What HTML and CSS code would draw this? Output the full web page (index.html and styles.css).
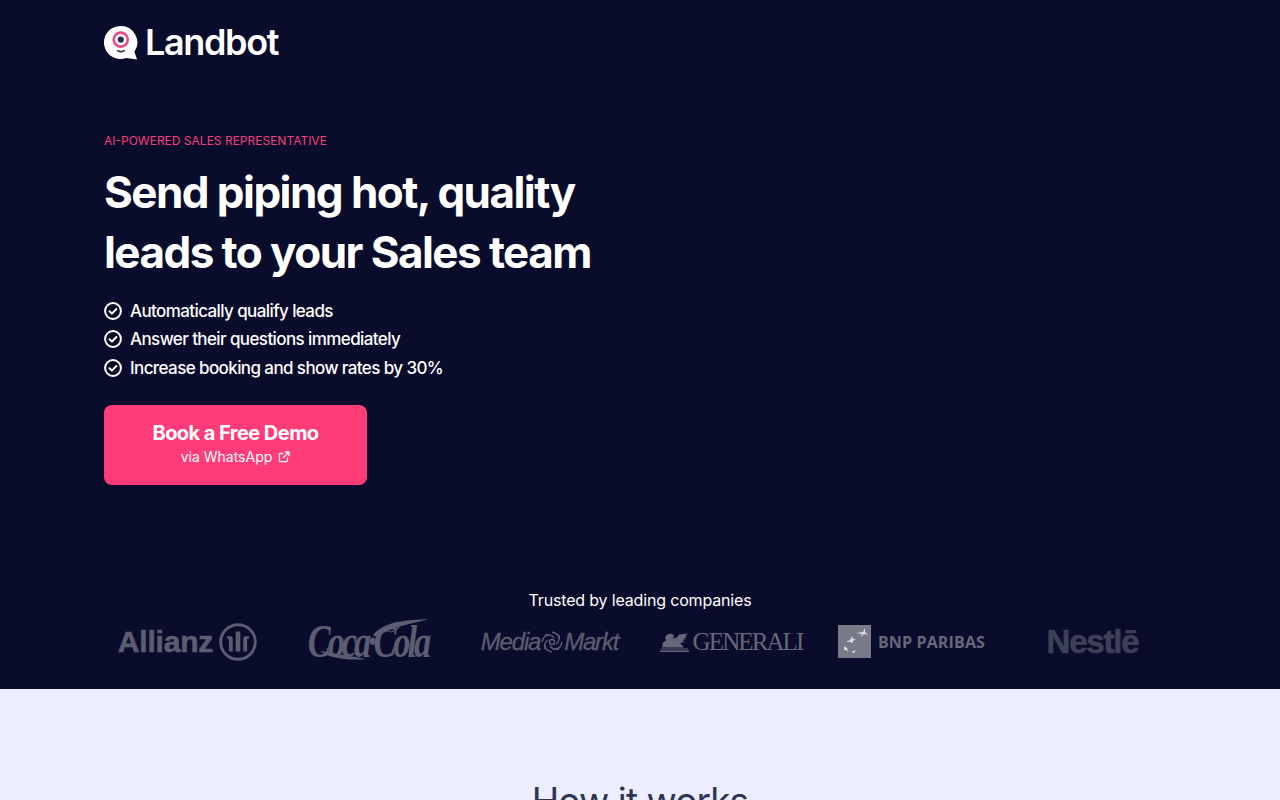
FILE: index.html
```html
<!DOCTYPE html>
<html lang="en">
<head>
<meta charset="utf-8">
<title>Landbot</title>
<link rel="stylesheet" href="styles.css">
</head>
<body>
<section class="hero">
  <header class="brand">
    <svg class="brand-mark" viewBox="0 0 34 34" width="34" height="34" aria-hidden="true">
      <path d="M16.5 0a16.5 16.5 0 1 0 5.6 32l10.9 1.4-2.6-7.6A16.5 16.5 0 0 0 16.5 0z" fill="#fff"/>
      <circle cx="16.8" cy="13.6" r="7" fill="none" stroke="#f0487f" stroke-width="2.6"/>
      <circle cx="16.8" cy="13.6" r="3.1" fill="#2c3050"/>
      <path d="M13.6 24.6c2 1.3 4.6 1.3 6.6 0" fill="none" stroke="#2c3050" stroke-width="1.7" stroke-linecap="round"/>
    </svg>
    <span class="brand-name">Landbot</span>
  </header>
  <div class="intro">
    <p class="eyebrow">AI-POWERED SALES REPRESENTATIVE</p>
    <h1 class="title">Send piping hot, quality<br>leads to your Sales team</h1>
    <ul class="checks">
      <li class="check"><svg class="check-icon" viewBox="0 0 18 18" aria-hidden="true"><circle cx="9" cy="9" r="7.9" fill="none" stroke="#fff" stroke-width="2"/><path d="M5.5 9.3l2.4 2.3 4.5-4.6" fill="none" stroke="#fff" stroke-width="2" stroke-linecap="round" stroke-linejoin="round"/></svg>Automatically qualify leads</li>
      <li class="check"><svg class="check-icon" viewBox="0 0 18 18" aria-hidden="true"><circle cx="9" cy="9" r="7.9" fill="none" stroke="#fff" stroke-width="2"/><path d="M5.5 9.3l2.4 2.3 4.5-4.6" fill="none" stroke="#fff" stroke-width="2" stroke-linecap="round" stroke-linejoin="round"/></svg>Answer their questions immediately</li>
      <li class="check"><svg class="check-icon" viewBox="0 0 18 18" aria-hidden="true"><circle cx="9" cy="9" r="7.9" fill="none" stroke="#fff" stroke-width="2"/><path d="M5.5 9.3l2.4 2.3 4.5-4.6" fill="none" stroke="#fff" stroke-width="2" stroke-linecap="round" stroke-linejoin="round"/></svg>Increase booking and show rates by 30%</li>
    </ul>
    <a class="cta" href="#">
      <span class="cta-main">Book a Free Demo</span>
      <span class="cta-sub">via WhatsApp
        <svg class="cta-icon" viewBox="0 0 12 12" aria-hidden="true"><path d="M9.5 7v2.6a1 1 0 0 1-1 1H2.4a1 1 0 0 1-1-1V3.5a1 1 0 0 1 1-1H5M7.4 1h3.6v3.6M11 1L5.4 6.6" fill="none" stroke="#fff" stroke-width="1.3" stroke-linecap="round" stroke-linejoin="round"/></svg>
      </span>
    </a>
  </div>
  <div class="trusted">
    <p class="trusted-title">Trusted by leading companies</p>
    <div class="logos">
      <div class="logo logo-allianz"><span>Allianz</span>
        <svg class="allianz-mark" viewBox="0 0 36 36" aria-hidden="true"><circle cx="18" cy="18" r="16.4" fill="none" stroke="currentColor" stroke-width="2.8"/><path d="M7.5 12.5h3.3q2.2 0 2.2 2.2V27H9.4V15.6q0-1-1.9-1zM15.8 8h4.4v19h-4.4zM28.5 12.5h-3.3q-2.2 0-2.2 2.2V27h3.6V15.6q0-1 1.9-1z" fill="currentColor"/></svg>
      </div>
      <div class="logo logo-coke"><span class="coke-word">Coca·Cola</span>
        <svg class="coke-swoosh" viewBox="0 0 122 44" aria-hidden="true"><path d="M13 33c14 2 30 5 46 8-16 1.500-36 0-46-8z" fill="currentColor"/><path d="M66 17C78 3 100 2 122 1c-18 5-36 7-52 18z" fill="currentColor"/><ellipse cx="87" cy="9" rx="7" ry="3.500" transform="rotate(-35 87 9)" fill="none" stroke="currentColor"/></svg>
      </div>
      <div class="logo logo-mm"><span>Media</span>
        <svg class="mm-mark" viewBox="0 0 22 22" aria-hidden="true"><g fill="none" stroke="currentColor" stroke-width="1.400"><circle cx="11" cy="11" r="2.500"/><path d="M11 1c5 1 7 4 7 7M21 11c-1 5-4 7-7 7M11 21c-5-1-7-4-7-7M1 11c1-5 4-7 7-7M4 4c4-1 7 0 9 3M18 4c1 4 0 7-3 9M18 18c-4 1-7 0-9-3M4 18c-1-4 0-7 3-9"/></g></svg>
        <span>Markt</span>
      </div>
      <div class="logo logo-generali">
        <svg class="lion" viewBox="0 0 31 20" aria-hidden="true"><path d="M1 20v-1.500h29V20zM2 17.500v-1h27v1zM3 15.500l1-5 3-2-1-3 2-3 4-1 3 2-1 3 4-1 2-3 9-1-3 2h3l-4 2h3l-4 2h3l-4 1.500 3 1-5 1 4 4.500z" fill="currentColor"/></svg>
        <span>GENERALI</span>
      </div>
      <div class="logo logo-bnp">
        <svg class="bnp-mark" viewBox="0 0 33 33" aria-hidden="true"><rect width="33" height="33" fill="#787a87"/><path d="M18 8l7-1 2-4 0 4 3 3-4-1-3 3 1-3zM8 17l4-2 2-4 1 3 3 0-3 2-1 3-1-2zM6 21l3 2 1 4-2-2-2 0zM13 27l5-2-2 3z" fill="#d9dae0"/></svg>
        <span>BNP PARIBAS</span>
      </div>
      <div class="logo logo-nestle"><span>Nestlē</span></div>
    </div>
  </div>
</section>
<section class="how">
  <h2 class="how-title">How it works</h2>
</section>
</body>
</html>
```
FILE: styles.css
```css
* { box-sizing: border-box; }
html, body { margin: 0; padding: 0; overflow: hidden; height: 800px; }
body { font-family: Inter, "Liberation Sans", sans-serif; background: #eceeff; color: #fff; }
.hero { background: #0a0c2c; height: 689px; padding: 26px 0 0; display: flex; flex-direction: column; }
.brand { display: flex; align-items: center; gap: 7px; padding-left: 104px; height: 33px; }
.brand-mark { width: 34px; height: 34px; flex: none; }
.brand-name { font-size: 36px; font-weight: 600; letter-spacing: -1.35px; line-height: 33px; }
.intro { padding: 75px 0 0 104px; display: flex; flex-direction: column; align-items: flex-start; }
.eyebrow { margin: 0; font-size: 12px; line-height: 14px; color: #f43f78; letter-spacing: 0; }
.title { margin: 14px 0 0; font-size: 44px; line-height: 60px; font-weight: 700; letter-spacing: -1.55px; }
.checks { list-style: none; margin: 14.7px 0 0; padding: 0; }
.check { display: flex; align-items: center; gap: 8px; height: 28.5px; font-size: 17px; font-weight: 500; letter-spacing: -.6px; }
.check-icon { width: 18px; height: 18px; flex: none; }
.cta { margin-top: 22.8px; width: 263px; height: 80px; padding-bottom: 2px; background: #ff3c78; border-radius: 8px; display: flex; flex-direction: column; align-items: center; justify-content: center; color: #fff; text-decoration: none; }
.cta-main { font-size: 20px; line-height: 26px; font-weight: 700; letter-spacing: -.55px; }
.cta-sub { display: flex; align-items: center; gap: 6px; font-size: 14px; line-height: 20px; margin-top: 1px; }
.cta-icon { width: 12px; height: 12px; }
.trusted { margin-top: 105px; }
.trusted-title { margin: 0; text-align: center; font-size: 16px; line-height: 20px; letter-spacing: -.17px; }
.logos { width: 1086px; margin: 7px auto 0; display: grid; grid-template-columns: repeat(6, 1fr); height: 50px; }
.logo { display: flex; align-items: center; justify-content: center; color: #5b5d70; position: relative; white-space: nowrap; }
.logo-allianz { gap: 6px; font-family: "Liberation Sans", sans-serif; font-weight: 700; font-size: 30px; letter-spacing: -.2px; -webkit-text-stroke: .6px currentColor; }
.allianz-mark { width: 38px; height: 38px; }
.logo-coke { font-family: "Liberation Serif", serif; font-style: italic; font-weight: 700; font-size: 40px; letter-spacing: -3.6px; }
.coke-word { transform: translateX(-1px) scale(.86, 1.15); }
.coke-swoosh { position: absolute; left: 29px; top: 1px; width: 122px; height: 44px; }
.logo-mm { font-family: "Liberation Sans", sans-serif; font-style: italic; font-size: 24px; letter-spacing: -1.2px; -webkit-text-stroke: .3px currentColor; }
.mm-mark { width: 22px; height: 22px; margin: 0 1px; }
.logo-generali { gap: 3px; font-family: "Liberation Serif", serif; font-size: 25px; letter-spacing: -1.9px; color: #66687a; }
.lion { width: 31px; height: 20px; }
.logo-bnp { gap: 7px; font-family: "Open Sans", sans-serif; font-weight: 700; font-size: 16px; letter-spacing: .15px; color: #66687a; }
.bnp-mark { width: 33px; height: 33px; }
.logo-nestle { font-family: "Liberation Sans", sans-serif; font-weight: 700; font-size: 33px; letter-spacing: -1.2px; color: #3e4058; -webkit-text-stroke: .6px currentColor; }
.how { height: 111px; padding-top: 88px; text-align: center; }
.how-title { margin: 0; font-size: 37px; line-height: 48px; font-weight: 400; color: #2f3454; letter-spacing: -.9px; }
```
